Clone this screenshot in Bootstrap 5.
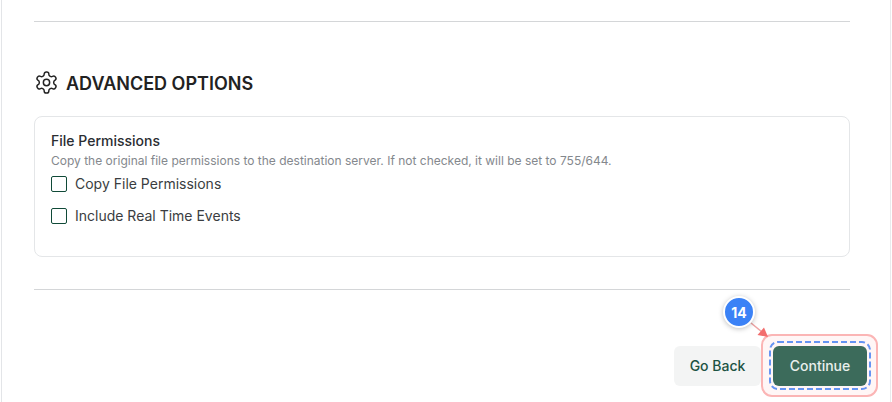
<!DOCTYPE html>
<html lang="en">
<head>
<meta charset="utf-8">
<title>Advanced Options</title>
<link href="https://cdn.jsdelivr.net/npm/bootstrap@5.3.0/dist/css/bootstrap.min.css" rel="stylesheet">
<style>
html,body{height:402px;overflow:hidden;background:#fff}
body{font-family:Inter,"Liberation Sans",sans-serif;color:#1a1a1a}
.shell{height:402px;margin:0 1px 0 1px;border-left:1px solid #e3e5e8;border-right:1px solid #e9eaec;padding:21px 40px 0 32px}
.rule{height:1px;background:#d4d6d8}
.sec-head{margin-top:49px;height:26px;gap:9px}
.sec-head svg{margin:-3px 0 0 2px;overflow:visible}
.sec-head h2{font-size:18px;line-height:26px;font-weight:600;margin:0;color:#222}
.opt-card{margin-top:19px;height:141px;border:1px solid #e4e6e8;border-radius:8px;padding:15px 16px 16px;box-shadow:none}
.opt-title{font-size:14px;line-height:17px;font-weight:500;color:#2a2d31}
.opt-desc{font-size:12px;line-height:16px;color:#84888d;margin-top:4px}
.opt-row{height:16px;gap:8px;font-size:14px;line-height:16px;color:#3a3d41;margin-top:7px}
.opt-row+.opt-row{margin-top:16px}
.opt-row .form-check-input{width:16px;height:16px;margin:0;border:1px solid #104a38;border-radius:2px;background-color:#fff;flex:none}
.rule-b{margin-top:32px}
.act-row{margin:56px -17px 0 0;gap:12px}
.act-btn{height:40px;border:0;border-radius:6px;font-size:14px;font-weight:500;padding:0;line-height:40px}
.act-back{width:87px;background:#f3f4f4;color:#1c5343}
.act-next{width:94px;background:#3c6b5b;color:#e9efec;position:relative;z-index:2}
.act-back:hover{background:#f3f4f4;color:#1c5343}
.act-next:hover{background:#3c6b5b;color:#e9efec}
.hl-outer{position:absolute;left:761px;top:334px;width:117px;height:63px;border:2px solid #fbb5b5;border-radius:11px;background:#fff6f6;z-index:1}
.hl-inner{position:absolute;left:769px;top:341px;width:102px;height:49px;z-index:3;pointer-events:none}
.step-badge{position:absolute;left:723px;top:296px;width:32px;height:32px;border-radius:50%;background:#3b82f6;border:2px solid #fff;box-shadow:0 1px 5px rgba(0,0,0,.25);color:#fff;font-size:14px;font-weight:700;display:flex;align-items:center;justify-content:center;z-index:4}
.step-arrow{position:absolute;left:748px;top:320px;width:24px;height:22px;z-index:3}
</style>
</head>
<body>
<div class="shell">
  <div class="rule"></div>
  <div class="sec-head d-flex align-items-center">
    <svg width="21" height="21" viewBox="2 2 20 20" fill="none" stroke="#222" stroke-width="1.4" stroke-linecap="round" stroke-linejoin="round" aria-hidden="true"><path d="M12.22 2h-.44a2 2 0 0 0-2 2v.18a2 2 0 0 1-1 1.73l-.43.25a2 2 0 0 1-2 0l-.15-.08a2 2 0 0 0-2.73.73l-.22.38a2 2 0 0 0 .73 2.73l.15.1a2 2 0 0 1 1 1.72v.51a2 2 0 0 1-1 1.74l-.15.09a2 2 0 0 0-.73 2.73l.22.38a2 2 0 0 0 2.73.73l.15-.08a2 2 0 0 1 2 0l.43.25a2 2 0 0 1 1 1.73V20a2 2 0 0 0 2 2h.44a2 2 0 0 0 2-2v-.18a2 2 0 0 1 1-1.73l.43-.25a2 2 0 0 1 2 0l.15.08a2 2 0 0 0 2.73-.73l.22-.39a2 2 0 0 0-.73-2.73l-.15-.08a2 2 0 0 1-1-1.74v-.5a2 2 0 0 1 1-1.74l.15-.09a2 2 0 0 0 .73-2.73l-.22-.38a2 2 0 0 0-2.73-.73l-.15.08a2 2 0 0 1-2 0l-.43-.25a2 2 0 0 1-1-1.73V4a2 2 0 0 0-2-2z"/><circle cx="12" cy="12" r="3"/></svg>
    <h2>ADVANCED OPTIONS</h2>
  </div>
  <div class="card opt-card">
    <div class="opt-title">File Permissions</div>
    <div class="opt-desc">Copy the original file permissions to the destination server. If not checked, it will be set to 755/644.</div>
    <label class="opt-row d-flex align-items-center"><input class="form-check-input" type="checkbox"><span>Copy File Permissions</span></label>
    <label class="opt-row d-flex align-items-center"><input class="form-check-input" type="checkbox"><span>Include Real Time Events</span></label>
  </div>
  <div class="rule rule-b"></div>
  <div class="act-row d-flex justify-content-end">
    <button type="button" class="btn act-btn act-back">Go Back</button>
    <button type="button" class="btn act-btn act-next">Continue</button>
  </div>
</div>
<div class="hl-outer"></div>
<svg class="hl-inner" viewBox="0 0 102 49" aria-hidden="true"><rect x="1" y="1" width="100" height="47" rx="8" fill="none" stroke="#6694f3" stroke-width="2" stroke-dasharray="6 3"/></svg>
<svg class="step-arrow" viewBox="0 0 24 22" aria-hidden="true"><line x1="3" y1="3" x2="14" y2="12" stroke="#eda3a3" stroke-width="1.6"/><path d="M20 17 L9.5 15 L16 7.5 Z" fill="#f26d6d"/></svg>
<div class="step-badge">14</div>
<script src="https://cdn.jsdelivr.net/npm/bootstrap@5.3.0/dist/js/bootstrap.bundle.min.js"></script>
</body>
</html>
